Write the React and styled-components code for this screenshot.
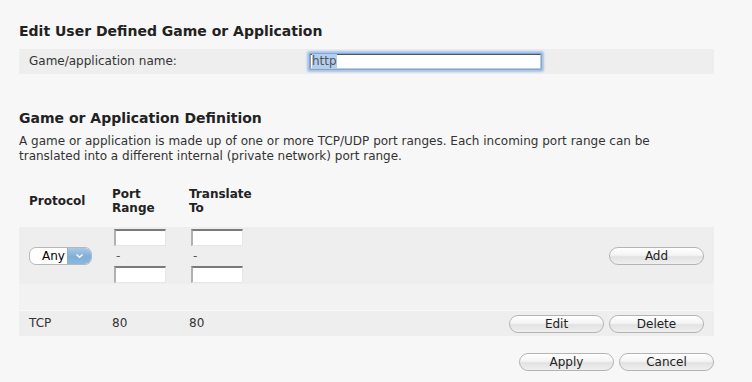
import React from "react";
import styled, { createGlobalStyle } from "styled-components";

const GlobalStyle = createGlobalStyle`
  html, body { margin: 0; padding: 0; background: #f7f7f7; }
  body {
    font-family: "DejaVu Sans", Verdana, sans-serif;
    font-size: 12px;
    color: #333;
  }
`;

const Page = styled.div`
  width: 695px;
  padding: 21px 0 0 19px;
`;

const Title = styled.h2`
  margin: 0 0 ${(p) => p.$after || 0}px;
  margin-top: ${(p) => p.$before || 0}px;
  font-size: 14px;
  line-height: 20px;
  font-weight: bold;
  color: #222;
`;

const NameRow = styled.div`
  display: grid;
  grid-template-columns: 281px 231px;
  align-items: center;
  height: 25px;
  padding-left: 10px;
  background: #eeeeee;
`;

const Label = styled.span`
  line-height: 15px;
`;

const FocusedField = styled.div`
  box-sizing: border-box;
  height: 15px;
  background: #fff;
  border-top: 1px solid #555;
  border-left: 1px solid #9a9a9a;
  border-right: 1px solid #c8c8c8;
  border-bottom: 1px solid #c8c8c8;
  box-shadow: 0 0 0 1px #7aa7dc, 0 0 2px 3px rgba(110, 160, 225, 0.55);
  border-radius: 1px;
  font-size: 12px;
  line-height: 13px;
  padding-left: 1px;
  color: #555;
`;

const Selected = styled.span`
  background: #b3cff0;
`;

const Para = styled.p`
  margin: 6px 0 0;
  line-height: 15px;
  width: 660px;
`;

const Grid = styled.div`
  display: grid;
  grid-template-columns: 83px 77px 1fr auto;
  align-items: center;
  background: ${(p) => p.$bg || "transparent"};
  height: ${(p) => (p.$h ? `${p.$h}px` : "auto")};
  margin-top: ${(p) => p.$mt || 0}px;
`;

const Cell = styled.div`
  padding-left: 10px;
  line-height: ${(p) => (p.$head ? "14px" : "15px")};
  font-weight: ${(p) => (p.$head ? "bold" : "normal")};
  color: ${(p) => (p.$head ? "#222" : "#333")};
`;

const RangeStack = styled.div`
  display: flex;
  flex-direction: column;
  padding-left: 12px;
`;

const Dash = styled.div`
  line-height: 20px;
  height: 20px;
  padding-left: 2px;
  color: #555;
`;

const SmallInput = styled.input`
  box-sizing: border-box;
  width: 52px;
  height: 17px;
  margin: 0;
  padding: 0 2px;
  background: #fff;
  border: none;
  border-top: 2px solid #7a7a7a;
  border-left: 2px solid #b0b0b0;
  border-right: 1px solid #e6e6e6;
  border-bottom: 1px solid #e6e6e6;
  font: 12px "DejaVu Sans", Verdana, sans-serif;
  outline: none;
`;

const SelectBox = styled.div`
  box-sizing: border-box;
  display: flex;
  width: 63px;
  height: 18px;
  border: 1px solid #b8b8b8;
  border-radius: 7px;
  overflow: hidden;
  background: #fff;
`;

const SelectText = styled.span`
  flex: 1;
  line-height: 16px;
  padding-left: 12px;
  color: #000;
`;

const SelectArrow = styled.span`
  width: 23px;
  display: flex;
  align-items: center;
  justify-content: center;
  background: linear-gradient(#a9c9e8, #7eaed9 55%, #8ab8e0);
  border-left: 1px solid #8fb0cf;
`;

const Actions = styled.div`
  display: flex;
  gap: 5px;
  justify-content: flex-end;
  padding-right: ${(p) => (p.$flush ? 0 : 10)}px;
`;

const Button = styled.button`
  box-sizing: border-box;
  width: 95px;
  height: 18px;
  margin: 0;
  padding: 0;
  border: 1px solid #b4b4b4;
  border-radius: 9px;
  background: linear-gradient(#ffffff 0%, #f4f4f4 45%, #e2e2e2 55%, #efefef 100%);
  box-shadow: inset 0 1px 0 #fff;
  font: 12px "DejaVu Sans", Verdana, sans-serif;
  line-height: 16px;
  color: #222;
`;

const Footer = styled.div`
  margin-top: 17px;
`;

export default function App() {
  return (
    <>
      <GlobalStyle />
      <Page>
        <Title $after={8}>Edit User Defined Game or Application</Title>
        <NameRow>
          <Label>Game/application name:</Label>
          <FocusedField>
            <Selected>http</Selected>
          </FocusedField>
        </NameRow>

        <Title $before={34}>Game or Application Definition</Title>
        <Para>
          A game or application is made up of one or more TCP/UDP port ranges. Each incoming port range can be
          translated into a different internal (private network) port range.
        </Para>

        <Grid $mt={23} $h={28}>
          <Cell $head>Protocol</Cell>
          <Cell $head>
            Port
            <br />
            Range
          </Cell>
          <Cell $head>
            Translate
            <br />
            To
          </Cell>
          <div />
        </Grid>

        <Grid $mt={12} $h={57} $bg="#eeeeee">
          <Cell>
            <SelectBox>
              <SelectText>Any</SelectText>
              <SelectArrow>
                <svg width="9" height="6" viewBox="0 0 9 6">
                  <path d="M1.5 1.5 L4.5 4.2 L7.5 1.5" fill="none" stroke="#fff" strokeWidth="1.4" />
                </svg>
              </SelectArrow>
            </SelectBox>
          </Cell>
          <RangeStack>
            <SmallInput />
            <Dash>-</Dash>
            <SmallInput />
          </RangeStack>
          <RangeStack>
            <SmallInput />
            <Dash>-</Dash>
            <SmallInput />
          </RangeStack>
          <Actions>
            <Button>Add</Button>
          </Actions>
        </Grid>

        <Grid $h={26} $bg="#f2f2f2" />

        <Grid $mt={1} $h={25} $bg="#eeeeee">
          <Cell>TCP</Cell>
          <Cell>80</Cell>
          <Cell>80</Cell>
          <Actions>
            <Button>Edit</Button>
            <Button>Delete</Button>
          </Actions>
        </Grid>

        <Footer>
          <Actions $flush>
            <Button>Apply</Button>
            <Button>Cancel</Button>
          </Actions>
        </Footer>
      </Page>
    </>
  );
}
